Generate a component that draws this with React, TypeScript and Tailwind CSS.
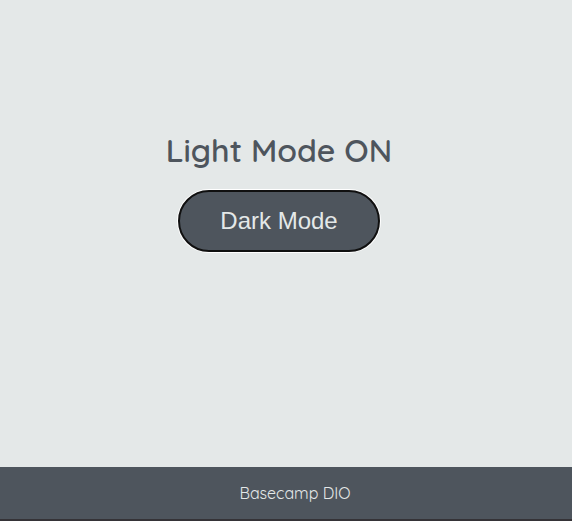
import { useState } from "react";

export default function App() {
  const [dark, setDark] = useState(false);

  return (
    <div
      className={`flex min-h-screen flex-col font-[Quicksand,Lato,sans-serif] ${
        dark ? "bg-[#2b2a2c] text-[#e4e8e8]" : "bg-[#e4e8e8] text-[#4e555d]"
      }`}
    >
      <main className="flex flex-1 flex-col items-center justify-center gap-5 pr-3.5 pb-[85px]">
        <h1 className="text-[32px] leading-10 font-semibold">
          {dark ? "Dark Mode ON" : "Light Mode ON"}
        </h1>
        <button
          type="button"
          onClick={() => setDark(!dark)}
          className="rounded-full border-2 border-[#101010] bg-[#4e555d] px-10 py-3 font-['Liberation_Sans',Arial,sans-serif] text-2xl leading-[34px] text-[#e4e8e8] ring-1 ring-white"
        >
          {dark ? "Light Mode" : "Dark Mode"}
        </button>
      </main>
      <footer className="border-b-2 border-[#353337] bg-[#4e555d] py-3.5 pl-4.5 text-center text-base text-[#e4e8e8]">
        Basecamp DIO
      </footer>
    </div>
  );
}
